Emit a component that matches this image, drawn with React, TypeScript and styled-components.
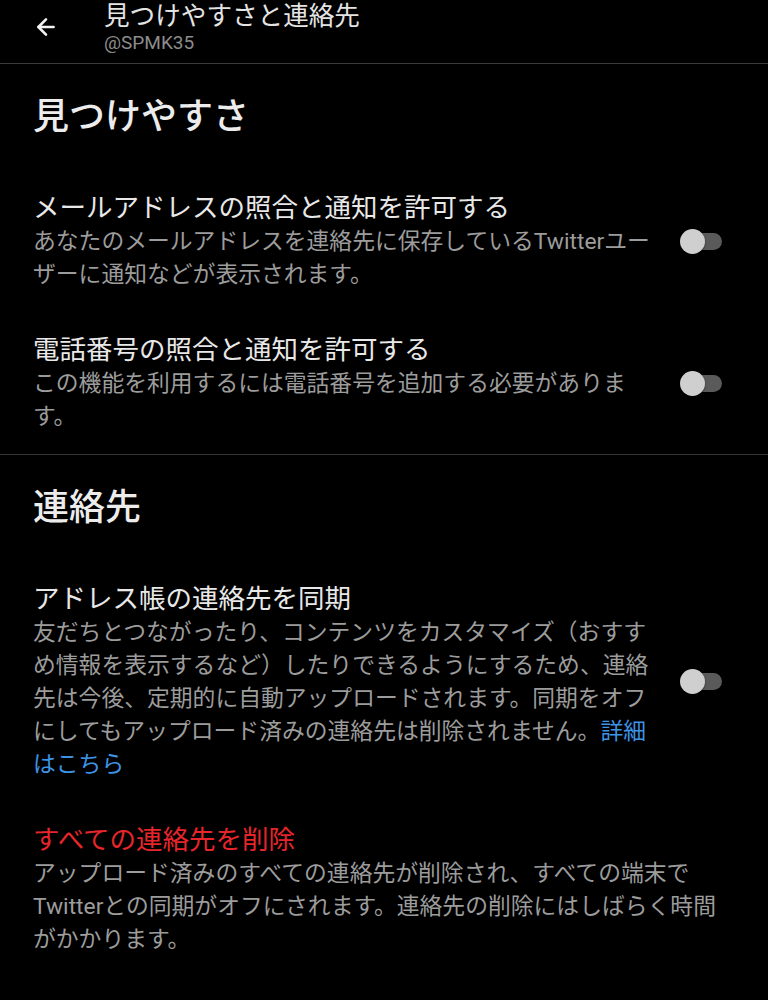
import { ArrowLeft } from "lucide-react";
import styled, { createGlobalStyle } from "styled-components";

const GlobalStyle = createGlobalStyle`
  html, body {
    margin: 0;
    padding: 0;
    background: #000;
  }
  body {
    font-family: Roboto, "Noto Sans CJK JP", "Noto Sans", sans-serif;
    color: #e8e8e8;
  }
`;

const Page = styled.div`
  width: 768px;
  min-height: 1000px;
  background: #000;
  overflow: hidden;
`;

const Header = styled.header`
  display: flex;
  align-items: flex-start;
  padding-bottom: 7px;
  border-bottom: 1px solid #3a3a3a;
`;

const BackButton = styled.div`
  width: 71px;
  padding-left: 33px;
  padding-top: 14px;
  display: flex;
`;

const HeaderText = styled.div`
  display: flex;
  flex-direction: column;
  padding-top: 2px;
`;

const HeaderTitle = styled.div`
  font-size: 25.6px;
  line-height: 28px;
  color: #e4e4e4;
`;

const Handle = styled.div`
  font-size: 19px;
  line-height: 26px;
  color: #8c8c8c;
`;

const Section = styled.section<{ $noBorder?: boolean }>`
  padding-top: 31px;
  border-bottom: ${(p) => (p.$noBorder ? "none" : "1px solid #333")};
`;

const SectionHeading = styled.h2`
  margin: 0 0 31px;
  padding: 0 33px;
  font-size: 36px;
  line-height: 44px;
  font-weight: 500;
  color: #ececec;
`;

const Row = styled.div<{ $hasToggle: boolean }>`
  display: grid;
  grid-template-columns: ${(p) => (p.$hasToggle ? "1fr 42px" : "1fr")};
  column-gap: 22px;
  align-items: center;
  padding: 21px ${(p) => (p.$hasToggle ? "46px" : "35px")} 21px 33px;
`;

const RowTitle = styled.div<{ $danger?: boolean }>`
  font-size: 26.5px;
  line-height: 34px;
  color: ${(p) => (p.$danger ? "#e6262b" : "#e8e8e8")};
`;

const RowDesc = styled.div`
  font-size: 22.8px;
  line-height: 33px;
  color: #9c9c9c;
`;

const Link = styled.span`
  color: #3d93e4;
`;

const Switch = styled.div`
  position: relative;
  width: 42px;
  height: 25px;
`;

const Track = styled.div`
  position: absolute;
  left: 4px;
  top: 4px;
  width: 38px;
  height: 17px;
  border-radius: 9px;
  background: #5a5a5a;
`;

const Knob = styled.div`
  position: absolute;
  left: 0;
  top: 0;
  width: 25px;
  height: 25px;
  border-radius: 50%;
  background: #cfcfcf;
  box-shadow: 0 1px 2px rgba(0, 0, 0, 0.5);
`;

type Item = {
  title: string;
  desc: React.ReactNode;
  toggle?: boolean;
  danger?: boolean;
};

const discoverItems: Item[] = [
  {
    title: "メールアドレスの照合と通知を許可する",
    desc: "あなたのメールアドレスを連絡先に保存しているTwitterユーザーに通知などが表示されます。",
    toggle: true,
  },
  {
    title: "電話番号の照合と通知を許可する",
    desc: "この機能を利用するには電話番号を追加する必要があります。",
    toggle: true,
  },
];

const contactItems: Item[] = [
  {
    title: "アドレス帳の連絡先を同期",
    desc: (
      <>
        友だちとつながったり、コンテンツをカスタマイズ（おすすめ情報を表示するなど）したりできるようにするため、連絡先は今後、定期的に自動アップロードされます。同期をオフにしてもアップロード済みの連絡先は削除されません。
        <Link>詳細はこちら</Link>
      </>
    ),
    toggle: true,
  },
  {
    title: "すべての連絡先を削除",
    desc: "アップロード済みのすべての連絡先が削除され、すべての端末でTwitterとの同期がオフにされます。連絡先の削除にはしばらく時間がかかります。",
    danger: true,
  },
];

const SettingRow: React.FC<{ item: Item }> = ({ item }) => (
  <Row $hasToggle={!!item.toggle}>
    <div>
      <RowTitle $danger={item.danger}>{item.title}</RowTitle>
      <RowDesc>{item.desc}</RowDesc>
    </div>
    {item.toggle && (
      <Switch>
        <Track />
        <Knob />
      </Switch>
    )}
  </Row>
);

const App: React.FC = () => {
  return (
    <Page>
      <GlobalStyle />
      <Header>
        <BackButton>
          <ArrowLeft size={26} strokeWidth={2.4} color="#f2f2f2" />
        </BackButton>
        <HeaderText>
          <HeaderTitle>見つけやすさと連絡先</HeaderTitle>
          <Handle>@SPMK35</Handle>
        </HeaderText>
      </Header>

      <Section>
        <SectionHeading>見つけやすさ</SectionHeading>
        {discoverItems.map((item) => (
          <SettingRow key={item.title} item={item} />
        ))}
      </Section>

      <Section $noBorder>
        <SectionHeading>連絡先</SectionHeading>
        {contactItems.map((item) => (
          <SettingRow key={item.title} item={item} />
        ))}
      </Section>
    </Page>
  );
};

export default App;
